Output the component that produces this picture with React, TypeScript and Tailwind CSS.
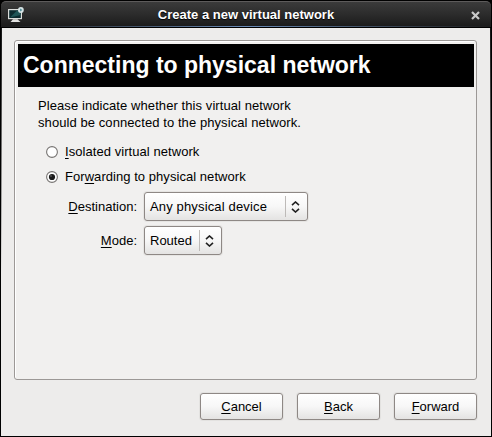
import type { ReactNode } from "react";

function Button({ mnemonic, rest }: { mnemonic: string; rest: string }) {
  return (
    <button className="flex h-[27px] w-[83px] items-center justify-center rounded-[3px] border border-[#8e8885] bg-linear-to-b from-white via-[#f7f7f7] to-[#e4e3e2] shadow-[0_0_0_1px_#e3e2e0]">
      <Label mnemonic={mnemonic} rest={rest} />
    </button>
  );
}

function Label({ before = "", mnemonic, rest }: { before?: string; mnemonic: string; rest: string }) {
  return (
    <span className="whitespace-nowrap">
      {before}
      <span className="underline decoration-1 underline-offset-2">{mnemonic}</span>
      {rest}
    </span>
  );
}

function Radio({ checked = false }: { checked?: boolean }) {
  return (
    <svg className="mr-[7px] h-3 w-3 shrink-0" viewBox="0 0 12 12">
      <circle cx="6" cy="6" r="5.4" fill="white" stroke="#777472" strokeWidth="1.1" />
      {checked && <circle cx="6" cy="6" r="3.1" fill="#1b1b1b" />}
      {checked && <circle cx="5" cy="5" r="0.8" fill="#777" />}
    </svg>
  );
}

function Combo({ children }: { children: ReactNode }) {
  return (
    <div className="flex h-[29px] items-center justify-between rounded-[3px] border border-[#8e8885] bg-linear-to-b from-white via-[#f7f7f7] to-[#e4e3e2] pl-[5px] shadow-[0_0_0_1px_#e6e5e3]">
      <span className="whitespace-nowrap">{children}</span>
      <div className="flex h-[21px] w-[22px] items-center border-l border-[#bdbab8] pl-[5px]">
        <svg className="h-3 w-[9px]" viewBox="0 0 9 12" fill="none" stroke="#222" strokeWidth="1.6">
          <path d="M1 4.2 L4.5 1 L8 4.2 M1 7.8 L4.5 11 L8 7.8" />
        </svg>
      </div>
    </div>
  );
}

export default function App() {
  return (
    <div className="h-[437px] w-[492px] bg-black font-['Liberation_Sans',sans-serif] text-[13px] leading-[17px] text-black">
      <div className="flex h-[437px] flex-col overflow-hidden rounded-t-[6px] px-px pb-px">
        <header className="mt-px flex h-[25px] shrink-0 items-center rounded-t-[5px] border-t border-[#5d5b5b] bg-linear-to-b from-[#3b3b3b] via-[#2c2c2c] to-[#1c1c1c] pl-[7px] pr-[11px]">
          <svg className="mt-0.5 h-4 w-4 shrink-0" viewBox="0 0 16 16">
            <rect x="0.6" y="2.6" width="12.8" height="9" fill="#0b2b2f" stroke="#d9dcda" strokeWidth="1.2" />
            <path d="M2 10.5 L9 3.5 H12.5 V8Z" fill="#1e5557" />
            <path d="M5 12.2 H9.5 L12.5 15 H2.5Z" fill="#e4e4e2" />
            <circle cx="12.9" cy="3" r="2.9" fill="#d5e3e5" />
            <path d="M12.2 1.6 L14.3 3 L12.2 4.4Z" fill="#3b7f8b" />
          </svg>
          <h1 className="mr-[3px] flex-1 pt-px text-center font-bold text-white [text-shadow:0_1px_1px_black]">
            Create a new virtual network
          </h1>
          <svg className="mt-[3px] h-[9px] w-[9px]" viewBox="0 0 9 9" fill="none" stroke="#c8c8c8" strokeWidth="2.2">
            <path d="M1 1 L8 8 M8 1 L1 8" />
          </svg>
        </header>
        <div className="h-px shrink-0 bg-linear-to-r from-[#1c1c1c] via-[#6b8cb8] to-[#1c1c1c]" />
        <div className="h-px shrink-0 bg-black" />
        <div className="flex-1 bg-linear-to-b from-[#151515] to-[#edeceb] to-60% pl-px pr-px">
          <main className="h-full bg-[#edeceb] px-3 pt-3">
            <section className="h-[340px] w-[463px] rounded-[3px] border border-[#9c9896] bg-[#f1f0ef] px-[3px] pt-[3px] shadow-[inset_1px_1px_0_white]">
              <h2 className="h-[43px] w-[456px] bg-black pl-[5px] text-[23px] leading-[43px] font-bold text-white">
                Connecting to physical network
              </h2>
              <p className="mt-2.5 ml-5 whitespace-nowrap tracking-[0.08px]">
                Please indicate whether this virtual network
                <br />
                should be connected to the physical network.
              </p>
              <div className="mt-3 ml-7 flex h-[17px] items-center tracking-[0.06px]">
                <Radio />
                <Label mnemonic="I" rest="solated virtual network" />
              </div>
              <div className="mt-2 ml-7 flex h-[17px] items-center tracking-[0.05px]">
                <Radio checked />
                <Label before="For" mnemonic="w" rest="arding to physical network" />
              </div>
              <div className="mt-[7px] ml-7 grid grid-cols-[91px_164px] gap-x-[7px] gap-y-[5px]">
                <div className="flex items-center justify-end">
                  <Label mnemonic="D" rest="estination:" />
                </div>
                <div className="tracking-[0.15px]">
                  <Combo>Any physical device</Combo>
                </div>
                <div className="flex items-center justify-end">
                  <Label mnemonic="M" rest="ode:" />
                </div>
                <div className="w-[78px]">
                  <Combo>Routed</Combo>
                </div>
              </div>
            </section>
            <footer className="mt-[13px] ml-[186px] flex gap-3.5">
              <Button mnemonic="C" rest="ancel" />
              <Button mnemonic="B" rest="ack" />
              <Button mnemonic="F" rest="orward" />
            </footer>
          </main>
        </div>
      </div>
    </div>
  );
}
